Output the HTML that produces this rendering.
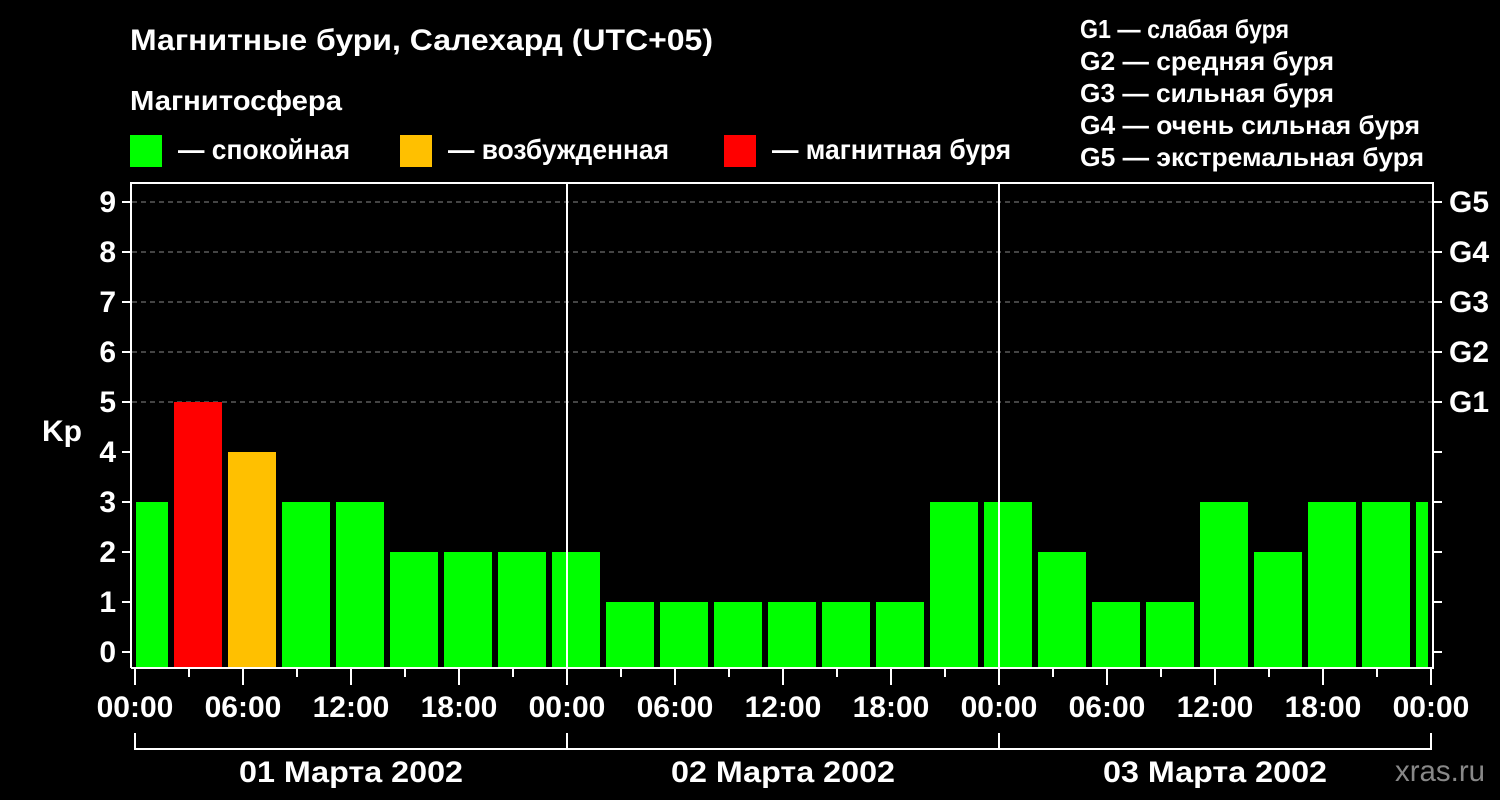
<!DOCTYPE html>
<html><head><meta charset="utf-8"><style>
html,body{margin:0;padding:0;background:#000;width:1500px;height:800px;overflow:hidden}
svg{display:block}
text{font-family:"Liberation Sans",sans-serif;font-weight:bold;fill:#fff}
</style></head><body>
<svg width="1500" height="800" viewBox="0 0 1500 800" xmlns="http://www.w3.org/2000/svg">
<rect width="1500" height="800" fill="#000"/>
<text x="130" y="50" font-size="30" textLength="583" lengthAdjust="spacingAndGlyphs">Магнитные бури, Салехард (UTC+05)</text>
<text x="130" y="110" font-size="28" textLength="212" lengthAdjust="spacingAndGlyphs">Магнитосфера</text>
<rect x="130" y="135" width="32" height="32" fill="#00ff00"/>
<text x="178" y="159" font-size="28" textLength="172" lengthAdjust="spacingAndGlyphs">— спокойная</text>
<rect x="400" y="135" width="32" height="32" fill="#ffc000"/>
<text x="448" y="159" font-size="28" textLength="221" lengthAdjust="spacingAndGlyphs">— возбужденная</text>
<rect x="724" y="135" width="32" height="32" fill="#ff0000"/>
<text x="772" y="159" font-size="28" textLength="239" lengthAdjust="spacingAndGlyphs">— магнитная буря</text>
<g font-size="26">
<text x="1080" y="38" textLength="209" lengthAdjust="spacingAndGlyphs">G1 — слабая буря</text>
<text x="1080" y="70" textLength="254" lengthAdjust="spacingAndGlyphs">G2 — средняя буря</text>
<text x="1080" y="102" textLength="254" lengthAdjust="spacingAndGlyphs">G3 — сильная буря</text>
<text x="1080" y="134" textLength="340" lengthAdjust="spacingAndGlyphs">G4 — очень сильная буря</text>
<text x="1080" y="166" textLength="344" lengthAdjust="spacingAndGlyphs">G5 — экстремальная буря</text>
</g>
<g stroke="#888" stroke-width="1" stroke-dasharray="5,4">
<line x1="132" y1="202" x2="1433" y2="202"/>
<line x1="132" y1="252" x2="1433" y2="252"/>
<line x1="132" y1="302" x2="1433" y2="302"/>
<line x1="132" y1="352" x2="1433" y2="352"/>
<line x1="132" y1="402" x2="1433" y2="402"/>
</g>
<g fill="#00ff00">
<rect x="136" y="502" width="32" height="166"/>
<rect x="174" y="402" width="48" height="266" fill="#ff0000"/>
<rect x="228" y="452" width="48" height="216" fill="#ffc000"/>
<rect x="282" y="502" width="48" height="166"/>
<rect x="336" y="502" width="48" height="166"/>
<rect x="390" y="552" width="48" height="116"/>
<rect x="444" y="552" width="48" height="116"/>
<rect x="498" y="552" width="48" height="116"/>
<rect x="552" y="552" width="48" height="116"/>
<rect x="606" y="602" width="48" height="66"/>
<rect x="660" y="602" width="48" height="66"/>
<rect x="714" y="602" width="48" height="66"/>
<rect x="768" y="602" width="48" height="66"/>
<rect x="822" y="602" width="48" height="66"/>
<rect x="876" y="602" width="48" height="66"/>
<rect x="930" y="502" width="48" height="166"/>
<rect x="984" y="502" width="48" height="166"/>
<rect x="1038" y="552" width="48" height="116"/>
<rect x="1092" y="602" width="48" height="66"/>
<rect x="1146" y="602" width="48" height="66"/>
<rect x="1200" y="502" width="48" height="166"/>
<rect x="1254" y="552" width="48" height="116"/>
<rect x="1308" y="502" width="48" height="166"/>
<rect x="1362" y="502" width="48" height="166"/>
<rect x="1416" y="502" width="12" height="166"/>
</g>
<g stroke="#fff" stroke-width="2" fill="none">
<polyline points="131,668 131,183 1433,183 1433,668 131,668"/>
<line x1="567" y1="183" x2="567" y2="668"/>
<line x1="999" y1="183" x2="999" y2="668"/>
</g>
<g stroke="#fff" stroke-width="2">
<line x1="122" y1="202" x2="131" y2="202"/><line x1="122" y1="252" x2="131" y2="252"/>
<line x1="122" y1="302" x2="131" y2="302"/><line x1="122" y1="352" x2="131" y2="352"/>
<line x1="122" y1="402" x2="131" y2="402"/><line x1="122" y1="452" x2="131" y2="452"/>
<line x1="122" y1="502" x2="131" y2="502"/><line x1="122" y1="552" x2="131" y2="552"/>
<line x1="122" y1="602" x2="131" y2="602"/><line x1="122" y1="652" x2="131" y2="652"/>
<line x1="1433" y1="202" x2="1442" y2="202"/><line x1="1433" y1="252" x2="1442" y2="252"/>
<line x1="1433" y1="302" x2="1442" y2="302"/><line x1="1433" y1="352" x2="1442" y2="352"/>
<line x1="1433" y1="402" x2="1442" y2="402"/><line x1="1433" y1="452" x2="1442" y2="452"/>
<line x1="1433" y1="502" x2="1442" y2="502"/><line x1="1433" y1="552" x2="1442" y2="552"/>
<line x1="1433" y1="602" x2="1442" y2="602"/><line x1="1433" y1="652" x2="1442" y2="652"/>
<line x1="135" y1="668" x2="135" y2="685"/><line x1="189" y1="668" x2="189" y2="677"/>
<line x1="243" y1="668" x2="243" y2="685"/><line x1="297" y1="668" x2="297" y2="677"/>
<line x1="351" y1="668" x2="351" y2="685"/><line x1="405" y1="668" x2="405" y2="677"/>
<line x1="459" y1="668" x2="459" y2="685"/><line x1="513" y1="668" x2="513" y2="677"/>
<line x1="567" y1="668" x2="567" y2="685"/><line x1="621" y1="668" x2="621" y2="677"/>
<line x1="675" y1="668" x2="675" y2="685"/><line x1="729" y1="668" x2="729" y2="677"/>
<line x1="783" y1="668" x2="783" y2="685"/><line x1="837" y1="668" x2="837" y2="677"/>
<line x1="891" y1="668" x2="891" y2="685"/><line x1="945" y1="668" x2="945" y2="677"/>
<line x1="999" y1="668" x2="999" y2="685"/><line x1="1053" y1="668" x2="1053" y2="677"/>
<line x1="1107" y1="668" x2="1107" y2="685"/><line x1="1161" y1="668" x2="1161" y2="677"/>
<line x1="1215" y1="668" x2="1215" y2="685"/><line x1="1269" y1="668" x2="1269" y2="677"/>
<line x1="1323" y1="668" x2="1323" y2="685"/><line x1="1377" y1="668" x2="1377" y2="677"/>
<line x1="1431" y1="668" x2="1431" y2="685"/>
</g>
<polyline points="135,733 135,749 1431,749 1431,733" stroke="#fff" stroke-width="2" fill="none"/>
<line x1="567" y1="733" x2="567" y2="749" stroke="#fff" stroke-width="2"/>
<line x1="999" y1="733" x2="999" y2="749" stroke="#fff" stroke-width="2"/>
<g font-size="30" text-anchor="end">
<text x="116" y="212">9</text><text x="116" y="262">8</text><text x="116" y="312">7</text>
<text x="116" y="362">6</text><text x="116" y="412">5</text><text x="116" y="462">4</text>
<text x="116" y="512">3</text><text x="116" y="562">2</text><text x="116" y="612">1</text>
<text x="116" y="662">0</text>
</g>
<text x="42" y="441" font-size="30">Kp</text>
<g font-size="30">
<text x="1449" y="212">G5</text><text x="1449" y="262">G4</text><text x="1449" y="312">G3</text>
<text x="1449" y="362">G2</text><text x="1449" y="412">G1</text>
</g>
<g font-size="30" text-anchor="middle">
<text x="135" y="717">00:00</text><text x="243" y="717">06:00</text><text x="351" y="717">12:00</text>
<text x="459" y="717">18:00</text><text x="567" y="717">00:00</text><text x="675" y="717">06:00</text>
<text x="783" y="717">12:00</text><text x="891" y="717">18:00</text><text x="999" y="717">00:00</text>
<text x="1107" y="717">06:00</text><text x="1215" y="717">12:00</text><text x="1323" y="717">18:00</text>
<text x="1431" y="717">00:00</text>
</g>
<g font-size="30">
<text x="239" y="782" textLength="224" lengthAdjust="spacingAndGlyphs">01 Марта 2002</text>
<text x="671" y="782" textLength="224" lengthAdjust="spacingAndGlyphs">02 Марта 2002</text>
<text x="1103" y="782" textLength="224" lengthAdjust="spacingAndGlyphs">03 Марта 2002</text>
</g>
<text x="1395" y="781" font-size="30" textLength="90" lengthAdjust="spacingAndGlyphs" style="font-weight:normal;fill:#888">xras.ru</text>
</svg>
</body></html>
